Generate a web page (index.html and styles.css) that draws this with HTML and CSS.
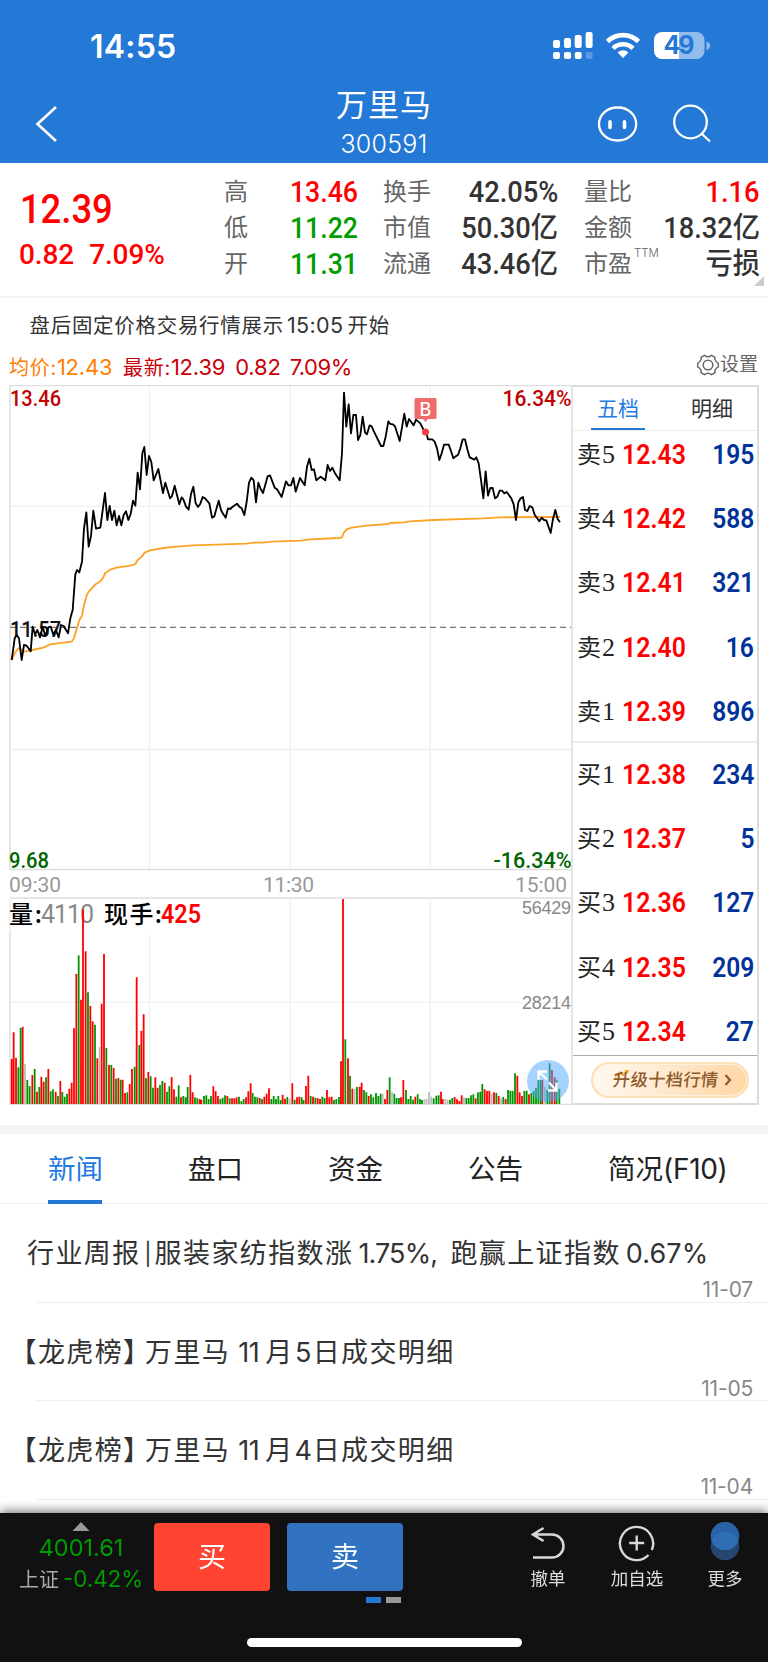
FILE: index.html
```html
<!DOCTYPE html>
<html lang="zh-CN">
<head>
<meta charset="utf-8">
<meta name="viewport" content="width=device-width">
<title>万里马 300591</title>
<link rel="stylesheet" href="styles.css">
</head>
<body>
<header class="top">
  <div class="status">
    <span class="clock">14:55</span>
    <svg class="status-icons" viewBox="550 28 164 36" width="164" height="36">
      <g fill="#fff">
        <rect x="553" y="40" width="7" height="8" rx="2"/><rect x="564" y="38" width="7" height="10" rx="2"/><rect x="574.7" y="35" width="7" height="13" rx="2"/><rect x="585.6" y="32" width="7" height="16" rx="2"/>
        <rect x="553" y="52" width="7" height="7" rx="2"/><rect x="564" y="52" width="7" height="7" rx="2"/><rect x="574.7" y="52" width="7" height="7" rx="2"/><rect x="585.6" y="52" width="7" height="7" rx="2" opacity=".25"/>
        <path d="M623 58l-5.4-5.6a8 8 0 0 1 10.800 0z"/>
      </g>
      <g fill="none" stroke="#fff" stroke-width="4.600"><path d="M607.500 41.500a22 22 0 0 1 31 0"/><path d="M613 48.300a14.500 14.500 0 0 1 20 0"/></g>
      <path d="M662 32h17v27h-17a8 8 0 0 1-8-8V40a8 8 0 0 1 8-8z" fill="#fff"/>
      <path d="M679 32h17.500a8 8 0 0 1 8 8v11a8 8 0 0 1-8 8H679z" fill="#fff" opacity=".5"/>
      <path d="M706.500 41.500q3.500 1 3.500 4.300t-3.500 4.300z" fill="#fff" opacity=".5"/>
      <text class="battery" x="679" y="54" text-anchor="middle" textLength="31">49</text>
    </svg>
  </div>
  <div class="nav">
    <svg class="back" width="30" height="44" viewBox="32 102 30 44"><path d="M56 107L37.500 124L56 141" fill="none" stroke="#fff" stroke-width="2.600"/></svg>
    <div class="titles"><h1>万里马</h1><p>300591</p></div>
    <svg class="nav-icons" width="120" height="44" viewBox="595 102 120 44" fill="none" stroke="#fff" stroke-width="2.300">
      <rect x="599" y="107.500" width="37.200" height="33" rx="18" ry="16.500"/>
      <path d="M610 121.800v5.600M624.500 121.800v5.600" stroke-width="3.600" stroke-linecap="round"/>
      <circle cx="690.500" cy="122" r="16.300"/><path d="M702 134l8 7.500"/>
    </svg>
  </div>
</header>

<section class="quote">
  <div class="last"><strong>12.39</strong><span><b>0.82</b><b>7.09%</b></span></div>
  <dl class="col c1"><div><dt>高</dt><dd class="up">13.46</dd></div><div><dt>低</dt><dd class="down">11.22</dd></div><div><dt>开</dt><dd class="down">11.31</dd></div></dl>
  <dl class="col c2"><div><dt>换手</dt><dd>42.05%</dd></div><div><dt>市值</dt><dd>50.30亿</dd></div><div><dt>流通</dt><dd>43.46亿</dd></div></dl>
  <dl class="col c3"><div><dt>量比</dt><dd class="up">1.16</dd></div><div><dt>金额</dt><dd>18.32亿</dd></div><div><dt>市盈<sup>TTM</sup></dt><dd>亏损</dd></div></dl>
  <i class="corner"></i>
</section>

<p class="notice">盘后固定价格交易行情展示<span>15:05</span>开始</p>
<div class="legend">
  <span class="avg">均价:<i>12.43</i></span><span class="latest">最新:<i>12.39</i></span><span class="latest chg"><i>0.82</i></span><span class="latest pct"><i>7.09%</i></span>
  <span class="settings"><svg width="24" height="24" viewBox="-12 -12 24 24" fill="none" stroke="#666" stroke-width="1.500" stroke-linejoin="round"><path d="M-3.500 -9.700Q0 -7 3.500 -9.700L6.800 -7.900Q6.500 -3.600 10.300 -1.900V1.900Q6.500 3.600 6.800 7.900L3.500 9.700Q0 7 -3.500 9.700L-6.800 7.900Q-6.500 3.600 -10.300 1.900V-1.900Q-6.500 -3.600 -6.800 -7.900Z"/><circle r="4.800"/></svg>设置</span>
</div>

<section class="market">
  <svg class="chart" width="571" height="720" viewBox="0 385 571 720">
    <g stroke="#f0f0f0" stroke-width="1.300"><path d="M149.500 385V869M290.300 385V869M430.300 385V869M149.500 934V1104M290.300 898V1104M430.300 898V1104M10 506.300H571M10 749.500H571M10 1002.300H571"/></g>
    <g stroke="#dedede" stroke-width="1.500" fill="none"><path d="M571 385.500H10V869.500H571M571 898H10M10 932V1104.500H571"/><path d="M10 898V932" stroke="#eee"/></g>
    <path d="M10 627.300H571" stroke="#777" stroke-width="1.200" stroke-dasharray="6 4"/>
    <g class="din">
      <text x="10" y="406" fill="#c00000" textLength="51" lengthAdjust="spacingAndGlyphs">13.46</text>
      <text x="571.500" y="406" fill="#c00000" textLength="69" lengthAdjust="spacingAndGlyphs" text-anchor="end">16.34%</text>
      <text x="10" y="636.500" fill="#111" textLength="51" lengthAdjust="spacingAndGlyphs">11.57</text>
      <text x="9" y="867.500" fill="#006400" textLength="40" lengthAdjust="spacingAndGlyphs">9.68</text>
      <text x="571.500" y="867.500" fill="#006400" textLength="78" lengthAdjust="spacingAndGlyphs" text-anchor="end">-16.34%</text>
      <g class="time"><text x="9" y="891.500" textLength="52">09:30</text><text x="263" y="891.500" textLength="51">11:30</text><text x="515" y="891.500" textLength="52">15:00</text></g>
    </g>
    <g class="vol-label">
      <text x="9" y="922.500" textLength="33">量:</text><text class="n" x="41" y="922.500" textLength="53" fill="#888">4110</text>
      <text x="104" y="922.500" textLength="58">现手:</text><text class="n b" x="161" y="922.500" textLength="40" lengthAdjust="spacingAndGlyphs" fill="#f00">425</text>
    </g>
    <g class="scale"><text x="571" y="914" text-anchor="end" textLength="49">56429</text><text x="571" y="1009" text-anchor="end" textLength="49">28214</text></g>
    <g transform="translate(0 850) scale(.33333)" fill="none" stroke-width="5.400"><path id="vr" stroke="#f00"/><path id="vg" stroke="#009500"/><path id="vn" stroke="#bbb"/></g>
    <g transform="translate(0 290) scale(.33333)" fill="none" stroke-linejoin="round">
      <polyline stroke="#fca326" stroke-width="5.500" points="35,1110 45,1088 57,1074 72,1085 98,1080 130,1073 150,1063 215,1055 222,1045 238,990 246,977 252,945 260,917 266,905 288,882 301,874 308,866 316,849 330,839 350,833 395,826 406,822 413,810 425,800 434,788 450,781 490,774 530,770 580,766 740,761 760,758 790,758 815,755 900,752 930,748 1015,744 1026,742 1032,727 1040,718 1055,713 1100,707 1165,702 1170,699 1210,697 1230,694 1300,690 1450,685 1500,682 1680,681"/>
      <polyline stroke="#000" stroke-width="5.500" points="35,1110 40,1075 44,1045 50,1035 57,1045 65,1110 72,1065 80,1067 92,1084 98,1010 105,1033 112,1020 120,1042 128,1010 136,1038 145,1012 152,1010 160,1034 168,1020 176,1042 183,1005 191,1008 204,1030 211,985 218,960 226,853 231,840 238,847 246,815 252,715 259,667 266,770 273,738 280,662 288,716 301,713 315,609 322,690 329,648 336,690 343,662 350,706 357,678 364,706 371,675 378,664 385,690 392,672 399,632 406,647 413,548 420,598 427,490 433,471 440,555 447,498 454,516 461,571 475,537 489,609 496,578 510,625 516,618 524,587 538,643 545,622 550,628 558,650 566,659 573,612 580,590 587,640 594,651 601,641 608,621 615,625 628,640 636,683 643,679 656,632 663,660 670,673 677,683 684,655 691,657 698,650 711,641 718,650 725,655 733,675 740,636 747,578 754,563 761,571 768,637 775,578 782,597 789,609 803,559 810,556 824,593 831,598 845,621 858,574 865,586 873,586 880,564 887,605 900,564 914,586 921,530 928,506 935,540 942,538 949,571 962,560 976,571 983,525 990,543 997,533 1004,548 1019,571 1026,490 1032,308 1039,410 1046,343 1053,430 1060,375 1068,375 1074,450 1081,435 1088,380 1095,427 1101,433 1109,406 1115,409 1122,425 1143,468 1150,468 1157,440 1165,394 1171,402 1179,403 1185,409 1199,453 1206,412 1213,371 1220,410 1227,387 1241,406 1248,389 1261,400 1270,418 1278,426 1284,448 1297,448 1304,455 1311,475 1318,510 1325,490 1332,464 1346,464 1353,483 1360,505 1367,499 1374,495 1381,475 1388,448 1395,448 1402,478 1409,502 1423,509 1429,502 1436,520 1443,570 1450,625 1457,544 1464,617 1471,594 1478,594 1485,625 1492,620 1499,602 1506,602 1513,610 1520,606 1534,625 1541,643 1548,690 1555,637 1562,625 1569,621 1575,660 1582,663 1589,648 1597,652 1604,674 1618,694 1625,683 1632,690 1639,691 1652,729 1659,687 1666,660 1673,687 1680,697"/>
    </g>
    <g fill="#f06b6b"><path d="M416 398h19a1.500 1.500 0 0 1 1.500 1.500v18a1.500 1.500 0 0 1-1.500 1.500h-7l-2.500 3-2.500-3h-7a1.500 1.500 0 0 1-1.500-1.500v-18a1.500 1.500 0 0 1 1.500-1.500z"/><circle cx="425.500" cy="432" r="3.600" fill="#f04048"/></g>
    <text class="mark" x="425.500" y="415.500" text-anchor="middle">B</text>
    <circle cx="548" cy="1081" r="21" fill="#4da6ff" opacity=".5"/>
    <g fill="none" stroke="#fff" stroke-width="2.300"><path d="M538.500 1079.500V1071.500H547M539 1072L547 1079.500M556.500 1082.500V1090.500H548M556 1090L549 1082.500"/></g>
  </svg>
  <aside class="book">
    <nav class="book-tabs"><span class="on">五档</span><span>明细</span></nav>
    <ul class="asks">
      <li><em>卖<i>5</i></em><b>12.43</b><u>195</u></li><li><em>卖<i>4</i></em><b>12.42</b><u>588</u></li><li><em>卖<i>3</i></em><b>12.41</b><u>321</u></li><li><em>卖<i>2</i></em><b>12.40</b><u>16</u></li><li><em>卖<i>1</i></em><b>12.39</b><u>896</u></li>
    </ul>
    <ul class="bids">
      <li><em>买<i>1</i></em><b>12.38</b><u>234</u></li><li><em>买<i>2</i></em><b>12.37</b><u>5</u></li><li><em>买<i>3</i></em><b>12.36</b><u>127</u></li><li><em>买<i>4</i></em><b>12.35</b><u>209</u></li><li><em>买<i>5</i></em><b>12.34</b><u>27</u></li>
    </ul>
    <div class="upgrade"><a><svg class="spark" width="16" height="8" viewBox="0 0 16 8"><path d="M1 6.500L6 2.500L9 5L14.500 1M11 1h3.500" fill="none" stroke="#ff9d1e" stroke-width="2"/></svg><span>升级十档行情</span><svg width="8" height="12" viewBox="0 0 8 12"><path d="M1.500 1L6 6L1.500 11" fill="none" stroke="#8d5a2d" stroke-width="2.200"/></svg></a></div>
  </aside>
</section>

<nav class="tabs"><span class="on">新闻</span><span>盘口</span><span>资金</span><span>公告</span><span>简况<i>(F10)</i></span></nav>
<ul class="news">
  <li><h2>行业周报<i class="bar">|</i>服装家纺指数涨<i class="n1">1.75%,</i>跑赢上证指数<i class="n2">0.67%</i></h2><time>11-07</time></li>
  <li><h2><q>【</q>龙虎榜<q class="r">】</q>万里马<i class="m">11</i>月<i class="d">5</i>日成交明细</h2><time>11-05</time></li>
  <li><h2><q>【</q>龙虎榜<q class="r">】</q>万里马<i class="m">11</i>月<i class="d">4</i>日成交明细</h2><time>11-04</time></li>
</ul>

<footer class="dock">
  <div class="index"><svg width="18" height="9" viewBox="0 0 18 9"><path d="M9 0l8.500 9H.5z" fill="#999"/></svg><span class="pts">4001.61</span><span class="idx">上证<i>-0.42%</i></span></div>
  <a class="btn buy">买</a><a class="btn sell">卖</a>
  <div class="act a1"><svg width="40" height="42" viewBox="0 0 40 42" fill="none" stroke="#d8d8d8" stroke-width="2.500"><path d="M15.500 6L5 12.500L15.500 19M5.500 12.500H24a11.500 11.500 0 0 1 0 23H5"/></svg>撤单</div>
  <div class="act a2"><svg width="40" height="42" viewBox="0 0 40 42" fill="none" stroke="#d8d8d8" stroke-width="2.400"><path d="M34.800 28A16.600 16.600 0 1 0 31.500 33M19.700 13.500v15M12.200 21h15"/></svg>加自选</div>
  <div class="act a3"><svg width="40" height="42" viewBox="0 0 40 42"><circle cx="20" cy="24" r="14.300" fill="#26466f"/><circle cx="20" cy="14" r="14.300" fill="#2a62a5"/><path d="M6.600 19a14.300 14.300 0 0 1 26.800 0A14.300 14.300 0 0 1 6.600 19z" fill="#2f6db5"/></svg>更多</div>
  <div class="dots"><i></i><i></i></div>
  <div class="home"></div>
</footer>
<script src="volume.js"></script>
</body>
</html>
```

FILE: styles.css
```css
* { box-sizing: border-box; margin: 0; padding: 0; }
body { width: 768px; height: 1662px; overflow: hidden; background: #fff; color: #333; font-family: Inter, "Noto Sans CJK SC", sans-serif; }
i, em, u, sup { font-style: normal; text-decoration: none; }
ul { list-style: none; }
svg { display: block; flex: none; }

.top { height: 163px; background: #2478d6; color: #fff; display: flex; flex-direction: column; }
.status { height: 84px; display: flex; padding: 28px 54px 0 90px; justify-content: space-between; }
.clock { font-size: 32px; font-weight: 600; line-height: 38px; letter-spacing: .2px; }
.battery { font: 700 25px Inter, sans-serif; fill: #2478d6; }
.nav { display: grid; grid-template-columns: 180px 1fr 180px; height: 79px; }
.back { margin: 18px 0 0 32px; }
.titles { text-align: center; padding-top: 2px; }
.titles h1 { font-size: 31px; font-weight: 400; line-height: 38px; letter-spacing: 1px; }
.titles p { font-size: 25px; font-weight: 300; line-height: 40px; letter-spacing: .2px; }
.nav-icons { margin: 18px 0 0 7px; }

.quote { height: 135px; border-bottom: 2px solid #f3f3f3; position: relative; display: flex; font-family: Roboto, "Noto Sans CJK SC", sans-serif; }
.last { width: 224px; padding: 24px 0 0 19px; color: #f00; }
.last strong { display: block; font-size: 40px; font-weight: 500; line-height: 46px; transform: scaleX(.91); transform-origin: left; padding-left: 1px; }
.last span { display: flex; gap: 15px; line-height: 44px; font-size: 28px; letter-spacing: -.1px; }
.last b { font-weight: 500; }
.col { padding-top: 11px; }
.col div { display: flex; justify-content: space-between; height: 36px; line-height: 36px; align-items: center; }
.col dt { font-size: 24px; color: #666; white-space: nowrap; }
.col dd { font-size: 29px; font-weight: 500; white-space: nowrap; transform: scaleX(.94); transform-origin: right; }
.c1 { width: 134px; }
.c1 dd { transform: scaleX(.92); }
.c2 { width: 175px; margin-left: 25px; }
.c3 { width: 176px; margin-left: 26px; }
.up { color: #f00; }
.down { color: #009c00; }
.col sup { font: 300 11.500px/12px Inter, sans-serif; vertical-align: 15px; margin-left: 2px; }
.corner { position: absolute; right: 4px; bottom: 10px; border: 5px solid transparent; border-right-color: #ccc; border-bottom-color: #ccc; }

.notice { height: 53px; line-height: 55px; padding-left: 29.500px; font-size: 20.500px; letter-spacing: .7px; white-space: nowrap; }
.notice span { font-size: 21.500px; letter-spacing: .4px; margin: 0 4px 0 3px; }
.legend { height: 34px; display: flex; line-height: 32px; font-size: 20px; padding-left: 9px; letter-spacing: .7px; }
.legend i { font-size: 22px; letter-spacing: -.2px; }
.avg { width: 114px; color: #ff8000; white-space: nowrap; }
.latest { color: #c8000a; white-space: nowrap; }
.chg { margin-left: 10px; }
.pct { margin-left: 9px; }
.pct i { letter-spacing: -.5px; }
.settings { margin-left: auto; margin-right: 10px; display: flex; align-items: center; font-size: 19px; letter-spacing: 0; color: #666; line-height: 30px; height: 28px; }

.market { display: flex; height: 720px; }
.din { font: 500 21.500px Roboto, sans-serif; }
.time { font-weight: 400; font-size: 21px; fill: #999; }
.vol-label { font: 500 24px "Noto Sans CJK SC", sans-serif; fill: #000; }
.n { font: 400 25px Roboto, sans-serif; }
.b { font-weight: 600; }
.scale { font: 18px "Liberation Sans", sans-serif; fill: #888; }
.mark { font: 500 18px Inter, sans-serif; fill: #fff; }
.book { width: 188px; border: 2px solid #dcdcdc; border-left-color: #e4e4e4; display: flex; flex-direction: column; }
.book-tabs { height: 44px; display: flex; border-bottom: 1px solid #eee; font-size: 21px; line-height: 43px; }
.book-tabs span { width: 54px; text-align: center; margin-left: 18px; }
.book-tabs span + span { margin-left: 40px; }
.book-tabs .on { color: #1f7be0; border-bottom: 2px solid #2478d6; height: 43px; }
.asks { height: 312px; border-bottom: 2px solid #eee; }
.asks li:first-child { margin-top: -8px; }
.book li { height: 64.200px; display: flex; align-items: center; padding: 0 3px 0 4px; }
.book em { width: 45px; font-size: 24px; color: #222; line-height: 64px; height: 64px; white-space: nowrap; }
.book em i { font: 26px "Liberation Serif", serif; margin-left: 1px; }
.book b { font: 600 27px Roboto, sans-serif; color: #f00; transform: scaleX(.92); transform-origin: left; }
.book u { font: 600 27px Roboto, sans-serif; color: #003399; margin-left: auto; transform: scaleX(.91); transform-origin: right; }
.bids { height: 313px; border-bottom: 1px solid #aaa; }
.upgrade { padding: 6px 0 0 18px; }
.upgrade a { position: relative; width: 158px; height: 36px; border: 2px solid #fce0b8; border-radius: 18px; background: linear-gradient(100deg, #fffaf2, #ffd6a2); box-shadow: inset 0 0 0 1px #fff2dd; display: flex; align-items: center; padding-left: 20px; color: #8d5a2d; gap: 5px; }
.upgrade span { font-size: 17.300px; font-weight: 500; transform: skewX(-6deg); letter-spacing: .3px; line-height: 34px; }
.spark { position: absolute; left: 21px; top: 6px; }

.tabs { margin-top: 20px; height: 79px; border-top: 9px solid #f4f4f4; border-bottom: 1px solid #eee; display: flex; padding-left: 48px; font-size: 27.500px; line-height: 71px; color: #222; }
.tabs span { width: 140px; white-space: nowrap; }
.tabs .on { color: #1f7be0; width: 54px; margin-right: 86px; border-bottom: 4px solid #2478d6; height: 70px; }
.tabs i { font-size: 28px; letter-spacing: -.3px; }

.news li { height: 98.700px; position: relative; padding: 30px 15px 0 27px; }
.news li::after { content: ""; position: absolute; left: 36px; right: 0; bottom: 0; height: 1px; background: #eee; }
.news h2 { font-size: 27px; font-weight: 400; line-height: 40px; height: 40px; letter-spacing: 1.400px; white-space: nowrap; display: flex; }
.news h2 i { font-weight: 400; letter-spacing: -.4px; }
.news .bar { width: 14px; text-align: center; font-size: 22px; }
.news .n1 { width: 97px; padding-left: 5px; letter-spacing: -.9px; }
.news .n2 { padding-left: 5px; letter-spacing: .1px; }
.news q { quotes: none; font-feature-settings: "halt"; margin-left: -4px; }
.news q.r { margin: 0 7px 0 0; }
.news .m { margin-left: 8px; width: 27px; letter-spacing: -.5px; }
.news .d { width: 19px; text-align: center; }
.news time { display: block; text-align: right; font-size: 21px; color: #888; line-height: 26px; margin-top: 3px; letter-spacing: -.2px; }

.dock { position: fixed; left: 0; top: 1513px; width: 768px; height: 149px; background: #111; box-shadow: 0 -2px 10px rgba(0,0,0,.55); display: flex; padding-top: 10px; color: #ddd; }
.index { width: 154px; padding-left: 8px; display: flex; flex-direction: column; align-items: center; margin-top: -1px; }
.pts { color: #009c00; font-size: 23.500px; line-height: 34px; }
.idx { font-size: 20px; line-height: 27px; color: #aaa; white-space: nowrap; }
.idx i { color: #009c00; font-size: 22.300px; margin-left: 4px; }
.btn { width: 116px; height: 68px; border-radius: 4px; background: #ff4431; color: #fff; font-size: 28px; line-height: 69px; text-align: center; }
.sell { background: #3173c0; margin-left: 17px; }
.act { font-size: 17.500px; line-height: 30px; display: flex; flex-direction: column; align-items: center; width: 60px; margin-left: 115px; margin-top: -1px; }
.a2 { margin-left: 29px; }
.a3 { margin-left: 28px; }
.dots { position: absolute; left: 366px; top: 84px; display: flex; gap: 5px; }
.dots i { width: 15px; height: 6px; background: #2478d6; }
.dots i + i { background: #999; }
.home { position: absolute; left: 247px; top: 125px; width: 275px; height: 9px; border-radius: 5px; background: #fff; }
```

FILE: volume.js
```js
// Each entry is x position, colour (r rise, g fall, n flat) and bar top.
const morning = "35r627 41r547 48r623 55g652 62g534 68r530 75n642 82g690 89g708 97r675 104g657 111r725 118g711 124r680 131r695 138g682 145r657 152g724 159g718 167r725 174g738 181r693 187g726 194g740 201g731 208r716 215r698 222r535 229r372 236g316 243r449 249r178 257r304 264g427 271r468 278r514 285g524 292r625 299n591 305r461 312r311 319g594 327r645 334g645 341r654 348g686 355r684 362g689 368r689 375r729 382g727 389r702 396r657 404g650 410r382 418g585 424r542 431r493 438g684 445r666 452g679 459g713 466r682 473r713 480g705 487g693 494r698 501g725 508g709 515r681 522r718 529g740 536g706 543r742 550g738 557g742 563g711 571r675 578r727 585g742 592g745 599r747 604r749 612g738 619g736 626g747 633g738 640r709 647r724 654r738 661g747 668g743 675g736 682r738 689g745 696r745 703r745 710r742 717g740 724g754 731g747 738r742 745r724 752r700 758g729 765g740 772g742 779r744 786g747 793r740 800r731 807r715 814g747 821g738 828g747 835g738 842g750 848r734 855r746 862g741 869n747";
const afternoon = "37r700 44g749 51r742 58r740 65g742 71g750 78r708 85r677 92g738 99r740 106g743 113r744 120r747 127g740 134g744 141r720 148r742 155r740 162g750 169g747 177g741 183r634 189r147 196g568 204r625 210g677 217r716 224n716 231g711 239r710 245r698 252g720 259g727 266r738 273g733 280g742 288g729 295g738 302g731 308n731 315r747 322r720 329g682 336n725 343g731 350g744 357g744 363r742 370r690 378g720 385g747 392g738 399g749 406r740 413g733 420g747 426g750 433n748 440n747 447n727 454n740 461g745 469g737 476g736 483r725 488r747 496n747 503n749 510g749 517g744 524r741 531r748 538r753 545r736 552n742 559g744 566g744 573g736 580g733 587r745 594g727 601g725 607g702 614r718 621r723 628r722 635n731 642r727 649g729 656r738 663n745 670g741 677r747 684g720 691g722 698g723 705g670 712r677 719r727 726r738 733g723 740g722 747r733 754g729 761g723 768g714 775g691 782g690 787r690 795n711 802g720 809g640 816r660 824r682 830g691 838g716";
const paths = { r: "", g: "", n: "" };
function collect(data, offset) {
  for (const bar of data.split(" ")) {
    const [, x, kind, top] = bar.match(/(\d+)([rgn])(\d+)/);
    paths[kind] += `M${+x + offset} 762V${top}`;
  }
}
collect(morning, 0);
collect(afternoon, 840);
for (const kind in paths) document.getElementById("v" + kind).setAttribute("d", paths[kind]);
```
